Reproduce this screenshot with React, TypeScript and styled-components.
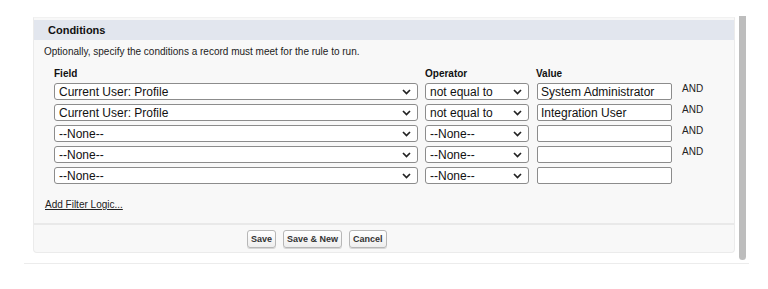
import React from "react";
import styled, { createGlobalStyle } from "styled-components";

const Global = createGlobalStyle`
  html, body { margin: 0; padding: 0; background: #ffffff; }
  body { font-family: "Liberation Sans", Arial, sans-serif; color: #181818; }
`;

const Page = styled.div`
  padding-top: 16px;
  padding-left: 24px;
`;

const Frame = styled.div`
  width: 725px;
  box-sizing: border-box;
  display: flex;
  align-items: flex-start;
  padding: 0 2px 0 9px;
  border-bottom: 1px solid #ececec;
  height: 248px;
`;

const Panel = styled.div`
  width: 702px;
  box-sizing: border-box;
  background: #f8f8f8;
  border: 1px solid #ebebeb;
  border-top-color: #f1f1f1;
  border-radius: 0 0 4px 4px;
  margin-top: 1px;
`;

const Header = styled.div`
  height: 20px;
  margin-top: 2px;
  background: #e2e6ee;
  padding-left: 14px;
  display: flex;
  align-items: center;
  font-size: 11px;
  font-weight: bold;
  color: #111;
`;

const Desc = styled.div`
  padding: 6px 0 0 10px;
  font-size: 10px;
  line-height: 12px;
  color: #222;
`;

const Grid = styled.div`
  display: grid;
  grid-template-columns: 364px 104px 135px auto;
  column-gap: 7px;
  row-gap: 4px;
  padding: 10px 0 0 20px;
  align-items: start;
`;

const ColLabel = styled.div`
  font-size: 10px;
  font-weight: bold;
  line-height: 12px;
  color: #111;
  margin-bottom: -1px;
`;

const SelectBox = styled.div`
  height: 17px;
  box-sizing: border-box;
  background: #fff;
  border: 1px solid #8c8c8c;
  border-radius: 3px;
  display: flex;
  align-items: center;
  justify-content: space-between;
  padding: 0 6px 0 4px;
  font-size: 12px;
  color: #111;
`;

const TextInput = styled.input`
  height: 17px;
  width: 135px;
  box-sizing: border-box;
  margin: 0 0 0 1px;
  background: #fff;
  border: 1px solid #8c8c8c;
  border-radius: 2px;
  padding: 0 3px;
  font-family: "Liberation Sans", Arial, sans-serif;
  font-size: 12px;
  color: #111;
  outline: none;
`;

const AndLabel = styled.div`
  font-size: 10px;
  line-height: 12px;
  color: #222;
  padding: 0 0 0 4px;
`;

const LinkRow = styled.div`
  padding: 10px 0 0 11px;
  height: 29px;
  box-sizing: border-box;
`;

const FilterLink = styled.a`
  font-size: 10px;
  color: #222;
  text-decoration: underline;
  cursor: pointer;
`;

const Footer = styled.div`
  border-top: 2px solid #e9e9e9;
  margin-top: 10px;
  height: 27px;
  display: flex;
  align-items: center;
  justify-content: flex-start;
  gap: 7px;
  padding-left: 213px;
`;

const Button = styled.button`
  height: 18px;
  padding: 0 3px;
  border: 1px solid #b7b7b7;
  border-radius: 3px;
  background: linear-gradient(#ffffff, #eeeeee);
  font-family: "Liberation Sans", Arial, sans-serif;
  font-size: 9px;
  font-weight: bold;
  color: #333;
  box-shadow: 0 1px 0 #d6d6d6;
`;

const Scroll = styled.div`
  width: 7px;
  height: 244px;
  margin-left: 4px;
  background: #bdbdbd;
  border-radius: 0 0 4px 4px;
`;

const Chevron = () => (
  <svg width="9" height="6" viewBox="0 0 9 6" fill="none">
    <path d="M1 1 L4.5 4.5 L8 1" stroke="#222" strokeWidth="1.7" />
  </svg>
);

const Select = ({ label }: { label: string }) => (
  <SelectBox>
    <span>{label}</span>
    <Chevron />
  </SelectBox>
);

type Row = { field: string; op: string; value: string; and: boolean };

const rows: Row[] = [
  { field: "Current User: Profile", op: "not equal to", value: "System Administrator", and: true },
  { field: "Current User: Profile", op: "not equal to", value: "Integration User", and: true },
  { field: "--None--", op: "--None--", value: "", and: true },
  { field: "--None--", op: "--None--", value: "", and: true },
  { field: "--None--", op: "--None--", value: "", and: false },
];

export default function App() {
  return (
    <Page>
      <Global />
      <Frame>
        <Panel>
          <Header>Conditions</Header>
          <Desc>Optionally, specify the conditions a record must meet for the rule to run.</Desc>
          <Grid>
            <ColLabel>Field</ColLabel>
            <ColLabel>Operator</ColLabel>
            <ColLabel>Value</ColLabel>
            <div />
            {rows.map((r, i) => (
              <React.Fragment key={i}>
                <Select label={r.field} />
                <Select label={r.op} />
                <TextInput readOnly value={r.value} />
                <AndLabel>{r.and ? "AND" : ""}</AndLabel>
              </React.Fragment>
            ))}
          </Grid>
          <LinkRow>
            <FilterLink>Add Filter Logic...</FilterLink>
          </LinkRow>
          <Footer>
            <Button>Save</Button>
            <Button>Save &amp; New</Button>
            <Button>Cancel</Button>
          </Footer>
        </Panel>
        <Scroll />
      </Frame>
    </Page>
  );
}
